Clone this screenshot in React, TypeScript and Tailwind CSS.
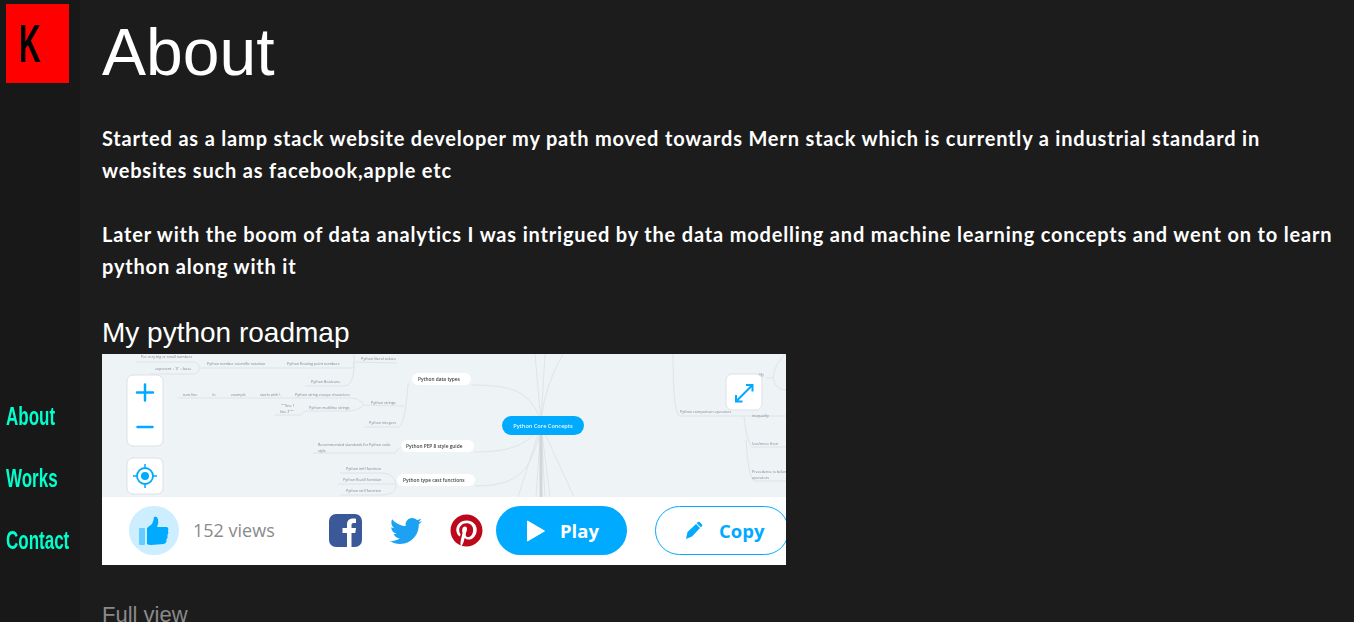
import React from 'react';
import { FaTwitter, FaPinterest } from 'react-icons/fa';

const labels = [
  { t: 'Per very big or small numbers', x: 141, y: 358 },
  { t: "exponent + 'E' + base", x: 155, y: 370 },
  { t: 'Python number scientific notation', x: 207, y: 365 },
  { t: 'Python floating point numbers', x: 287, y: 365 },
  { t: 'Python literal values', x: 361, y: 360 },
  { t: 'Python Booleans', x: 311, y: 383 },
  { t: 'new line', x: 183, y: 396 },
  { t: '\\n', x: 212, y: 396 },
  { t: 'example', x: 231, y: 396 },
  { t: 'starts with \\', x: 260, y: 396 },
  { t: 'Python string escape characters', x: 295, y: 396 },
  { t: '"""line 1', x: 281, y: 407 },
  { t: 'line 2"""', x: 280, y: 413 },
  { t: 'Python multiline strings', x: 309, y: 409 },
  { t: 'Python strings', x: 371, y: 404 },
  { t: 'Python integers', x: 369, y: 424 },
  { t: 'Recommended standards for Python code', x: 318, y: 446 },
  { t: 'style', x: 318, y: 452 },
  { t: 'Python int() function', x: 346, y: 470 },
  { t: 'Python float() function', x: 343, y: 481 },
  { t: 'Python str() function', x: 346, y: 492 },
  { t: 'modify', x: 752, y: 376 },
  { t: 'Python comparison operators', x: 680, y: 413 },
  { t: 'inequality', x: 752, y: 417 },
  { t: 'less/more than', x: 752, y: 445 },
  { t: 'Precedence is below', x: 752, y: 473 },
  { t: 'operators', x: 752, y: 479 },
];

const lines = [
  'M136 362 L193 362 Q198 362 200 368 L340 368 L352 368 Q354 368 354 364 L354 362 L397 363',
  'M150 374 L193 374 Q198 374 200 368',
  'M305 386 L344 386 Q353 386 354 368 L354 354',
  'M178 398 L281 398 L288 398 L350 398 Q360 398 364 405 L398 406 L404 406',
  'M275 415 L301 415 Q302 411 309 411 L350 411 Q358 411 364 405',
  'M364 427 L398 427 Q405 427 408 384 L410 384',
  'M313 453 L395 453 Q398 447 402 447',
  'M340 473 L382 473 Q395 473 396 486 M338 484 L396 484 M340 495 L382 495 Q395 495 396 486',
  'M471 385 C520 385 530 395 541 420',
  'M474 452 C520 452 530 440 541 425',
  'M475 486 C520 486 530 470 541 430',
  'M535 354 Q538 390 541 420 M545 354 Q543 390 541 420 M563 354 Q545 385 541 420',
  'M541 425 L518 497 M541 425 L536 497 M541 425 L541 497 M541 425 L545 497 M541 425 L550 497 M541 425 L574 497',
  'M673 354 Q673 416 680 416 L744 416 L746 416 L786 416',
  'M744 416 Q746 440 752 447 L786 447 M746 440 Q748 475 754 481 L786 481',
  'M766 378 L773 378 Q775 362 786 354 M773 378 Q775 390 786 390',
];

const MapCanvas = () => (
  <svg viewBox="102 354 684 143" className="block w-full h-[143px] bg-[#eef3f6] blur-[0.3px]">
    <g fill="none" stroke="#dfe4e7" strokeWidth="1">
      {lines.map((d, i) => (
        <path key={i} d={d} />
      ))}
    </g>
    <path d="M541 425 L541 497" stroke="#d2d6d9" strokeWidth="3" />
    <g fill="#7f878c" fontSize="3.7" fontFamily="'Open Sans', sans-serif">
      {labels.map((l) => (
        <text key={l.t} x={l.x} y={l.y}>
          {l.t}
        </text>
      ))}
    </g>
    {[
      { t: 'Python data types', x: 412, y: 373, w: 59, tx: 418 },
      { t: 'Python PEP 8 style guide', x: 401, y: 440, w: 73, tx: 406 },
      { t: 'Python type cast functions', x: 397, y: 474, w: 78, tx: 403 },
    ].map((n) => (
      <g key={n.t}>
        <rect x={n.x} y={n.y} width={n.w} height="12" rx="6" fill="#fff" />
        <text x={n.tx} y={n.y + 8} fontSize="4.8" fontWeight="600" fill="#444" fontFamily="'Open Sans', sans-serif">
          {n.t}
        </text>
      </g>
    ))}
    <rect x="502" y="416" width="82" height="19" rx="9.5" fill="#00aaff" />
    <text x="543" y="428" textAnchor="middle" fontSize="5.6" fontWeight="600" fill="#e8f7ff" fontFamily="'Open Sans', sans-serif">
      Python Core Concepts
    </text>

    {/* zoom controls */}
    <rect x="127" y="375" width="36" height="71" rx="6" fill="#fff" stroke="#dde2e5" />
    <path d="M137 392.500 H153 M145 384.500 V400.500" stroke="#00aaff" strokeWidth="2.500" strokeLinecap="round" />
    <path d="M137.500 427 H152.500" stroke="#00aaff" strokeWidth="2.500" strokeLinecap="round" />
    <rect x="127" y="458" width="36" height="36" rx="6" fill="#fff" stroke="#dde2e5" />
    <circle cx="145" cy="476" r="8" fill="none" stroke="#00aaff" strokeWidth="1.800" />
    <circle cx="145" cy="476" r="4" fill="#00aaff" />
    <path d="M145 464 V468 M145 484 V488 M133 476 H137 M153 476 H157" stroke="#00aaff" strokeWidth="1.500" />
    <rect x="726" y="374" width="36" height="36" rx="6" fill="#fff" stroke="#dde2e5" />
    <path
      d="M746 385 L752.500 385 L752.500 391.500 M752 385.500 L736 401.500 M736 395 L736 401.500 L742.500 401.500"
      fill="none"
      stroke="#00aaff"
      strokeWidth="2"
    />
  </svg>
);

const ShareBar = () => (
  <div className="flex h-[68px] items-center overflow-hidden bg-white pb-px font-['Open_Sans',sans-serif]">
    <div className="ml-[27px] flex h-[49px] w-[50px] shrink-0 items-center justify-center rounded-full bg-[#cceeff]">
      <svg viewBox="0 0 30 30" className="h-[30px] w-[30px]">
        <rect x="0" y="12" width="6" height="17" rx="1" fill="#66ccff" />
        <path
          d="M8 12 L13 8 Q15 4 15 1 Q18 0 19 3 Q20 7 18 11 L28 11 Q30 12 29 15 Q30 17 28.500 19 Q29 22 27.500 23 Q28 27 25 28 L12 29 Q9 29 8 28 Z"
          fill="#00aaff"
        />
      </svg>
    </div>
    <span className="ml-[14px] w-[136px] shrink-0 text-[18px] text-[#8a8a8a]">152 views</span>
    <svg viewBox="0 0 33 33" className="h-[33px] w-[33px] shrink-0">
      <rect width="33" height="33" rx="7" fill="#3b5998" />
      <path
        d="M18 33 V19 H13.500 V14 H18 V10.500 C18 6.500 20.500 4.500 24 4.500 C25.500 4.500 26.500 4.600 27 4.700 V9 H24.500 C22.800 9 22.500 10 22.500 11.200 V14 H27 L26.300 19 H22.500 V33 Z"
        fill="#fff"
      />
    </svg>
    <FaTwitter className="ml-[28px] h-[32px] w-[32px] shrink-0 text-[#1da1f2]" />
    <FaPinterest className="ml-[28px] h-[33px] w-[33px] shrink-0 text-[#bd081c]" />
    <div className="ml-[13px] flex h-[49px] w-[131px] shrink-0 items-center rounded-full bg-[#00aaff] pl-[31px] text-white">
      <svg viewBox="0 0 18 22" className="h-[22px] w-[18px]">
        <path d="M0.500 1 L17.500 11 L0.500 21 Z" fill="#fff" stroke="#fff" strokeLinejoin="round" />
      </svg>
      <span className="ml-[15px] text-[18.500px] font-bold">Play</span>
    </div>
    <div className="ml-[28px] flex h-[49px] w-[134px] shrink-0 items-center rounded-full border border-[#00aaff] pl-[29px] text-[#00aaff]">
      <svg viewBox="0 0 18 19" className="h-[19px] w-[18px]">
        <path d="M1 18 L2.500 11 L11 3 L15 7 L7 15.500 Z M11.500 2 L14 0.500 L17.500 4 L16 6.500 Z" fill="#00aaff" />
      </svg>
      <span className="ml-[16px] text-[18.500px] font-bold">Copy</span>
    </div>
  </div>
);

export default function App() {
  return (
    <div className="flex h-screen overflow-hidden bg-[#1c1c1c] font-['Liberation_Sans',sans-serif] text-white">
      {/* Sidebar */}
      <aside className="flex w-20 shrink-0 flex-col bg-[#181818] pl-[6px] pt-1">
        <div className="flex h-[79px] w-[63px] items-center bg-[#ff0000] pl-[13px] text-[53px] font-bold leading-none text-black">
          <span className="inline-block origin-left scale-x-[0.57]">K</span>
        </div>
        <nav className="mt-[315px] flex flex-col items-start gap-[26px] text-[25px] font-bold leading-[36px] text-[#00ffcc]">
          <a className="origin-left scale-x-[0.68]">About</a>
          <a className="origin-left scale-x-[0.68]">Works</a>
          <a className="origin-left scale-x-[0.68]">Contact</a>
        </nav>
      </aside>

      {/* Content */}
      <main className="min-w-0 flex-1 pl-[22px] pr-[16px]">
        <h1 className="mt-[14px] text-[66px] leading-[76px]">About</h1>
        <div className="mt-[32px] font-['Lato',sans-serif] text-[20px] font-bold leading-[32px] tracking-[0.82px]">
          <p>
            Started as a lamp stack website developer my path moved towards Mern stack which is currently a industrial
            standard in websites such as facebook,apple etc
          </p>
          <p className="mt-[32px]">
            Later with the boom of data analytics I was intrigued by the data modelling and machine learning concepts
            and went on to learn python along with it
          </p>
        </div>
        <h2 className="mt-[36px] text-[28px] leading-[30px]">My python roadmap</h2>
        <div className="mt-[6px] w-[684px]">
          <MapCanvas />
          <ShareBar />
        </div>
        <p className="mt-[37px] text-[22px] leading-[26px] text-[#8a8a8a]">Full view</p>
      </main>
    </div>
  );
}
